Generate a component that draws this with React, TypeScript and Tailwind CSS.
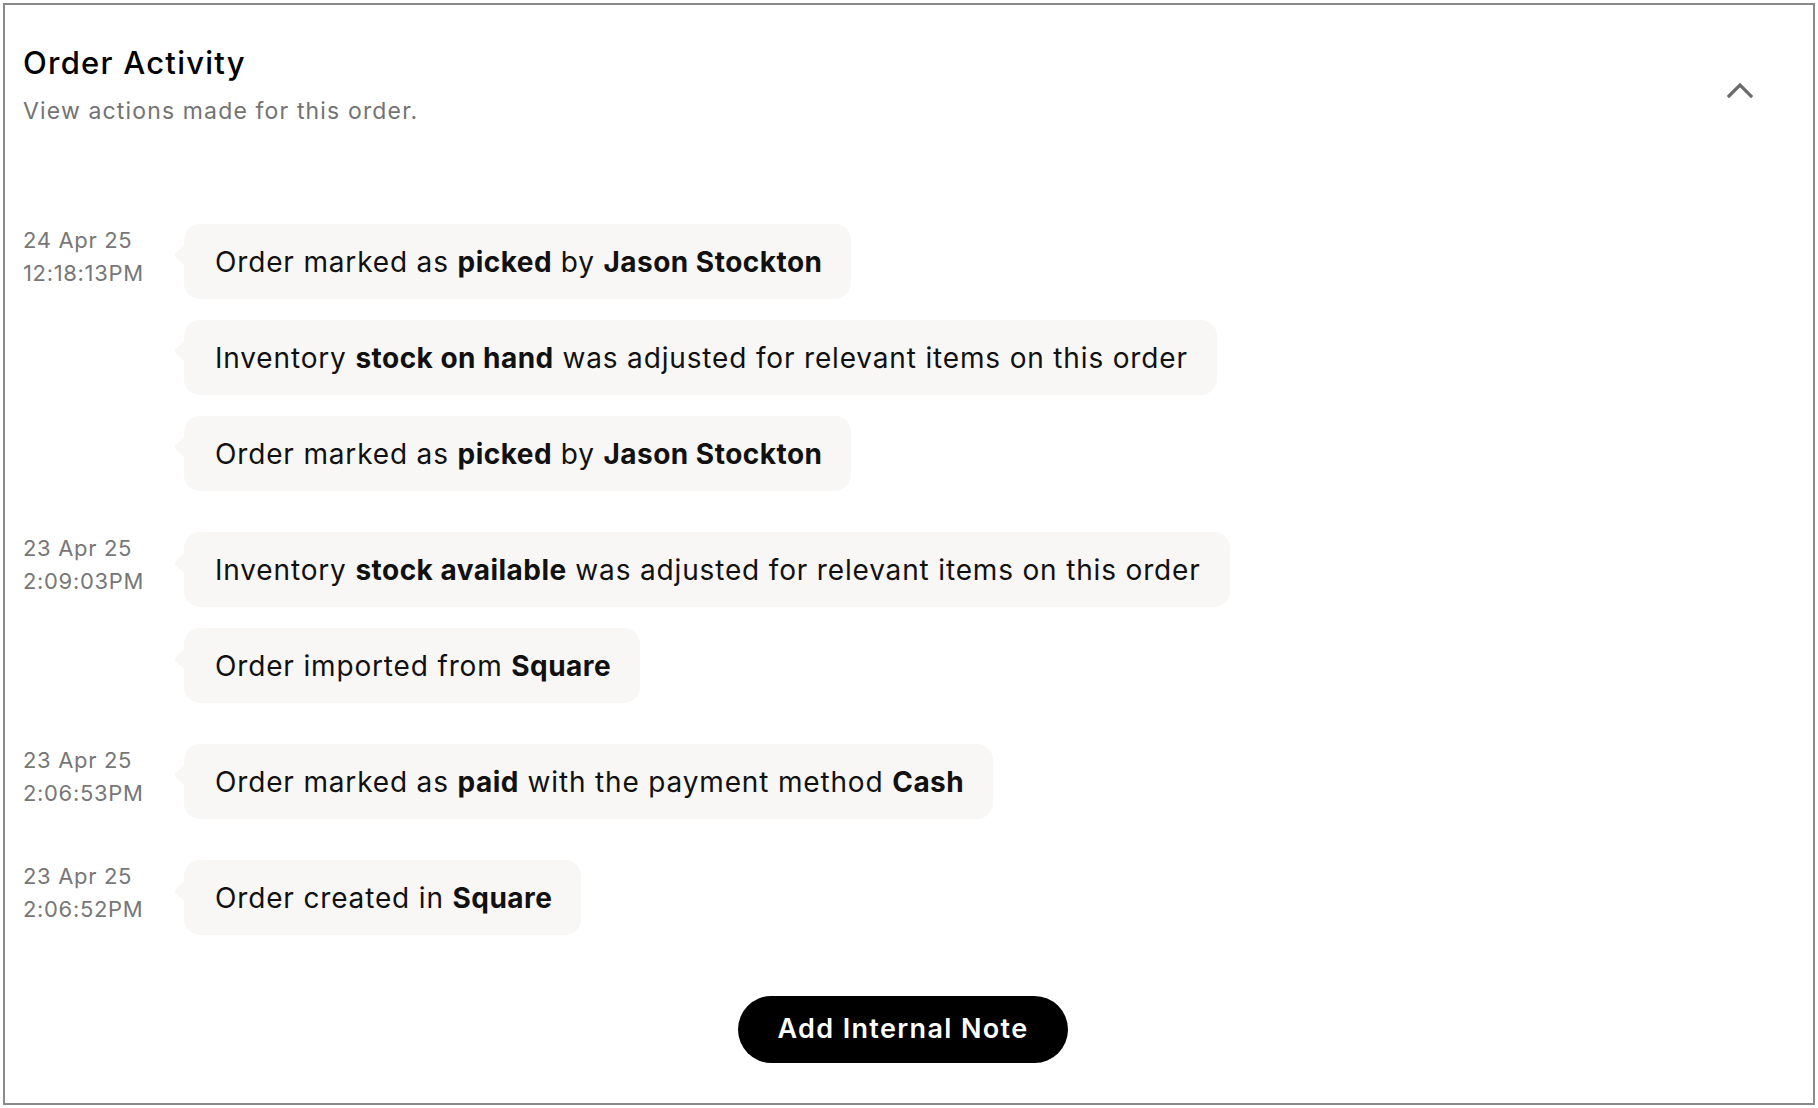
import React from "react";

type Part = { t: string; b?: boolean };
type Group = { date: string; time: string; items: Part[][] };

const groups: Group[] = [
  {
    date: "24 Apr 25",
    time: "12:18:13PM",
    items: [
      [{ t: "Order marked as " }, { t: "picked", b: true }, { t: " by " }, { t: "Jason Stockton", b: true }],
      [{ t: "Inventory " }, { t: "stock on hand", b: true }, { t: " was adjusted for relevant items on this order" }],
      [{ t: "Order marked as " }, { t: "picked", b: true }, { t: " by " }, { t: "Jason Stockton", b: true }],
    ],
  },
  {
    date: "23 Apr 25",
    time: "2:09:03PM",
    items: [
      [{ t: "Inventory " }, { t: "stock available", b: true }, { t: " was adjusted for relevant items on this order" }],
      [{ t: "Order imported from " }, { t: "Square", b: true }],
    ],
  },
  {
    date: "23 Apr 25",
    time: "2:06:53PM",
    items: [
      [{ t: "Order marked as " }, { t: "paid", b: true }, { t: " with the payment method " }, { t: "Cash", b: true }],
    ],
  },
  {
    date: "23 Apr 25",
    time: "2:06:52PM",
    items: [[{ t: "Order created in " }, { t: "Square", b: true }]],
  },
];

function Bubble({ parts }: { parts: Part[] }) {
  return (
    <div className="relative flex h-[75px] items-center rounded-[16px] bg-[#f8f7f5] pl-[31px] pr-[29px]">
      <svg
        className="absolute left-[-10px] top-[19px]"
        width="12"
        height="24"
        viewBox="0 0 12 24"
      >
        <path d="M12 0 L1.2 10.6 Q0 12 1.2 13.4 L12 24 Z" fill="#f8f7f5" />
      </svg>
      <span className="whitespace-nowrap text-[28px] leading-[34px] tracking-[0.03em] text-[#111]">
        {parts.map((p, i) =>
          p.b ? (
            <span key={i} className="font-bold tracking-[0.017em]">
              {p.t}
            </span>
          ) : (
            <span key={i}>{p.t}</span>
          )
        )}
      </span>
    </div>
  );
}

export default function App() {
  return (
    <div
      className="min-h-screen bg-white"
      style={{ fontFamily: "Inter, 'Noto Sans', sans-serif" }}
    >
      <div className="ml-[3px] mt-[3px] flex h-[1102px] w-[1812px] flex-col border-2 border-[#8a8a8a] pl-[18px] pr-[30px]">
        <div className="flex items-start justify-between pt-[40px]">
          <div className="flex flex-col">
            <h2 className="text-[31px] font-medium leading-[36px] tracking-[0.04em] text-black">
              Order Activity
            </h2>
            <p className="mt-[16px] text-[23px] leading-[28px] tracking-[0.05em] text-[#737373]">
              View actions made for this order.
            </p>
          </div>
          <button className="mr-[30px] mt-[38px]" aria-label="Collapse">
            <svg width="26" height="15" viewBox="0 0 26 15">
              <path
                d="M2 13 L13 2 L24 13"
                fill="none"
                stroke="#6b6b6b"
                strokeWidth="3.2"
                strokeLinecap="square"
                strokeLinejoin="miter"
              />
            </svg>
          </button>
        </div>

        <div className="mt-[99px] flex flex-col gap-[41px]">
          {groups.map((g, gi) => (
            <div key={gi} className="flex">
              <div className="w-[161px] shrink-0 text-[22px] leading-[33px] tracking-[0.03em] text-[#777]">
                <div>{g.date}</div>
                <div>{g.time}</div>
              </div>
              <div className="flex flex-col items-start gap-[21px]">
                {g.items.map((it, ii) => (
                  <Bubble key={ii} parts={it} />
                ))}
              </div>
            </div>
          ))}
        </div>

        <div className="mt-[61px] flex justify-center">
          <button className="flex h-[67px] w-[330px] items-center justify-center rounded-full bg-black text-[27px] font-semibold tracking-[0.05em] text-white">
            Add Internal Note
          </button>
        </div>
      </div>
    </div>
  );
}
